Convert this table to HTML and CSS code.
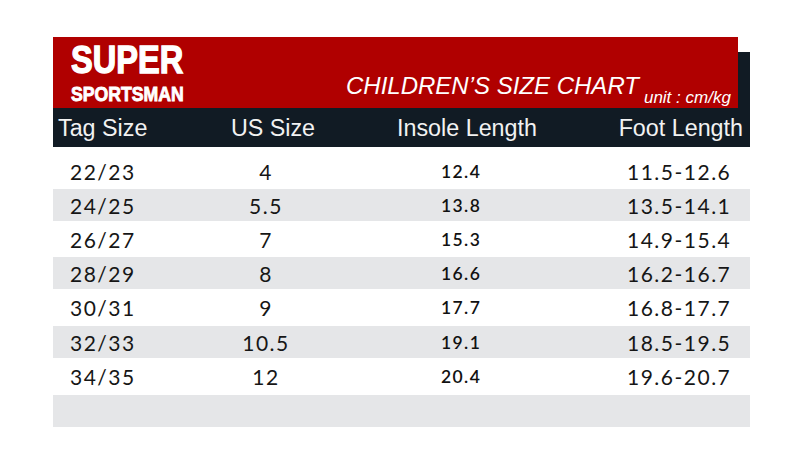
FILE: index.html
```html
<!DOCTYPE html>
<html>
<head>
<meta charset="utf-8">
<link rel="stylesheet" href="styles.css">
</head>
<body>
<div class="chart">
  <div class="top">
    <div class="banner">
      <div class="logo">
        <div class="logo-big"><span>SUPER</span></div>
        <div class="logo-small"><span>SPORTSMAN</span></div>
      </div>
      <div class="title">CHILDREN’S SIZE CHART<span class="unit">unit : cm/kg</span></div>
    </div>
    <div class="thead">
      <div class="h1">Tag Size</div>
      <div class="h2">US Size</div>
      <div class="h3">Insole Length</div>
      <div class="h4">Foot Length</div>
    </div>
  </div>
  <div class="tbody">
    <div class="row"><div class="c1">22/23</div><div class="c2">4</div><div class="c3">12.4</div><div class="c4">11.5-12.6</div></div>
    <div class="row alt"><div class="c1">24/25</div><div class="c2">5.5</div><div class="c3">13.8</div><div class="c4">13.5-14.1</div></div>
    <div class="row"><div class="c1">26/27</div><div class="c2">7</div><div class="c3">15.3</div><div class="c4">14.9-15.4</div></div>
    <div class="row alt"><div class="c1">28/29</div><div class="c2">8</div><div class="c3">16.6</div><div class="c4">16.2-16.7</div></div>
    <div class="row"><div class="c1">30/31</div><div class="c2">9</div><div class="c3">17.7</div><div class="c4">16.8-17.7</div></div>
    <div class="row alt"><div class="c1">32/33</div><div class="c2">10.5</div><div class="c3">19.1</div><div class="c4">18.5-19.5</div></div>
    <div class="row"><div class="c1">34/35</div><div class="c2">12</div><div class="c3">20.4</div><div class="c4">19.6-20.7</div></div>
    <div class="row alt"></div>
  </div>
</div>
</body>
</html>
```

FILE: styles.css
```css
html, body {
  margin: 0;
  padding: 0;
  background: #ffffff;
}

.chart {
  width: 697px;
  margin: 37px 0 0 53px;
}

.top {
  background: linear-gradient(to bottom, transparent 15px, #111b24 15px);
}

.banner {
  width: 685px;
  height: 71px;
  background: #b00000;
  display: flex;
  color: #ffffff;
}

.logo {
  width: 143px;
  padding-left: 18px;
  padding-top: 3px;
  font-family: "Liberation Sans", Arial, sans-serif;
  font-weight: bold;
  color: #ffffff;
  box-sizing: content-box;
  flex: none;
}

.logo-big {
  font-size: 39px;
  line-height: 39px;
  height: 39px;
  white-space: nowrap;
}

.logo-big span {
  display: inline-block;
  transform: scaleX(0.835);
  transform-origin: left center;
  -webkit-text-stroke: 1.4px #ffffff;
}

.logo-small {
  font-size: 21px;
  line-height: 21px;
  height: 21px;
  margin-top: 4px;
  white-space: nowrap;
}

.logo-small span {
  display: inline-block;
  transform: scaleX(0.84);
  transform-origin: left center;
  -webkit-text-stroke: 0.9px #ffffff;
}

.title {
  margin-left: 132px;
  margin-top: 37px;
  font-family: "Liberation Sans", Arial, sans-serif;
  font-style: italic;
  font-size: 24px;
  line-height: 24px;
  white-space: nowrap;
  color: #ffffff;
}

.unit {
  font-size: 17px;
  line-height: 17px;
  margin-left: 5px;
  vertical-align: -9px;
}

.thead {
  height: 39px;
  display: grid;
  grid-template-columns: 160px 120px 268px 1fr;
  align-items: center;
  font-family: "Liberation Sans", Arial, sans-serif;
  font-size: 23.3px;
  color: #f2f2f2;
  padding-top: 1px;
  box-sizing: border-box;
}

.h1 { padding-left: 5px; }
.h2 { text-align: center; }
.h3 { text-align: center; }
.h4 { text-align: right; padding-right: 7px; }

.tbody {
  padding-top: 6px;
}

.row {
  height: 36px;
  display: grid;
  grid-template-columns: 160px 106px 241px 1fr;
  align-items: center;
  font-family: Lato, "Noto Sans", sans-serif;
  font-size: 21px;
  letter-spacing: 1.5px;
  color: #161616;
}

.row.alt {
  height: 32px;
  background: #e5e6e8;
}

.row:nth-child(5),
.row:nth-child(7) {
  height: 37px;
}

.c1 { padding-left: 17px; }
.c2 { text-align: center; }
.c3 {
  padding-left: 122px;
  font-size: 17.5px;
  font-weight: 600;
  letter-spacing: 1.4px;
  color: #111111;
}
.c4 { padding-left: 67px; }
```
